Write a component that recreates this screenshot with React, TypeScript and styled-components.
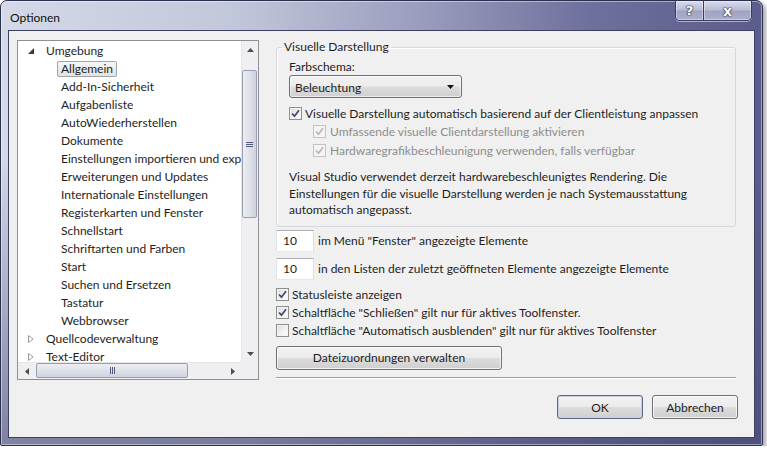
import React from "react";
import styled, { createGlobalStyle } from "styled-components";

const FONT = `Lato, "Liberation Sans", sans-serif`;

const GlobalStyle = createGlobalStyle`
  body {
    margin: 0;
    background: #ffffff;
    font-family: ${FONT};
    font-size: 12px;
    color: #1e1e1e;
  }
`;

export default function App() {
  return (
    <>
      <GlobalStyle />
      <Window>
        <TitleBar>
          <Title>Optionen</Title>
          <CaptionButtons>
            <CaptionButton $wide={false}>?</CaptionButton>
            <CaptionButton $wide={true}>x</CaptionButton>
          </CaptionButtons>
        </TitleBar>
        <Client>
          <Main>
            <TreePanel />
            <RightPanel />
          </Main>
          <Footer>
            <PushButton $default>OK</PushButton>
            <PushButton>Abbrechen</PushButton>
          </Footer>
        </Client>
      </Window>
    </>
  );
}

const treeChildren = [
  "Allgemein",
  "Add-In-Sicherheit",
  "Aufgabenliste",
  "AutoWiederherstellen",
  "Dokumente",
  "Einstellungen importieren und exportieren",
  "Erweiterungen und Updates",
  "Internationale Einstellungen",
  "Registerkarten und Fenster",
  "Schnellstart",
  "Schriftarten und Farben",
  "Start",
  "Suchen und Ersetzen",
  "Tastatur",
  "Webbrowser",
];

function TreePanel() {
  return (
    <Tree>
      <TreeContent>
        <TreeRow $level={0}>
          <Expander>
            <svg width="6" height="6" viewBox="0 0 6 6">
              <path d="M6 0 L6 6 L0 6 Z" fill="#3b3b3b" />
            </svg>
          </Expander>
          <TreeLabel>Umgebung</TreeLabel>
        </TreeRow>
        {treeChildren.map((t, i) => (
          <TreeRow key={t} $level={1}>
            <TreeLabel $selected={i === 0}>{t}</TreeLabel>
          </TreeRow>
        ))}
        {["Quellcodeverwaltung", "Text-Editor"].map((t) => (
          <TreeRow key={t} $level={0}>
            <Expander>
              <svg width="6" height="8" viewBox="0 0 6 8">
                <path d="M0.5 0.5 L5 4 L0.5 7.5 Z" fill="none" stroke="#9a9a9a" />
              </svg>
            </Expander>
            <TreeLabel>{t}</TreeLabel>
          </TreeRow>
        ))}
      </TreeContent>
      <VScroll>
        <ScrollArrow>
          <svg width="7" height="4" viewBox="0 0 7 4">
            <path d="M0 4 L3.5 0 L7 4 Z" fill="#4d4d4d" />
          </svg>
        </ScrollArrow>
        <VTrack>
          <VThumb>
            <svg width="7" height="7" viewBox="0 0 7 7">
              <path d="M0 1.5 H7 M0 3.5 H7 M0 5.5 H7" stroke="#55597a" strokeWidth="1" />
            </svg>
          </VThumb>
        </VTrack>
        <ScrollArrow>
          <svg width="7" height="4" viewBox="0 0 7 4">
            <path d="M0 0 L3.5 4 L7 0 Z" fill="#4d4d4d" />
          </svg>
        </ScrollArrow>
      </VScroll>
      <HScroll>
        <ScrollArrow>
          <svg width="4" height="7" viewBox="0 0 4 7">
            <path d="M4 0 L0 3.5 L4 7 Z" fill="#4d4d4d" />
          </svg>
        </ScrollArrow>
        <HTrack>
          <HThumb>
            <svg width="7" height="7" viewBox="0 0 7 7">
              <path d="M1.5 0 V7 M3.5 0 V7 M5.5 0 V7" stroke="#55597a" strokeWidth="1" />
            </svg>
          </HThumb>
        </HTrack>
        <ScrollArrow>
          <svg width="4" height="7" viewBox="0 0 4 7">
            <path d="M0 0 L4 3.5 L0 7 Z" fill="#4d4d4d" />
          </svg>
        </ScrollArrow>
      </HScroll>
      <ScrollCorner />
    </Tree>
  );
}

function CheckBox({ checked, disabled }: { checked: boolean; disabled?: boolean }) {
  return (
    <CheckBoxBox $disabled={disabled}>
      {checked && (
        <svg width="11" height="11" viewBox="0 0 11 11">
          <path
            d="M2 5.5 L4.5 8.2 L9 2.3"
            fill="none"
            stroke={disabled ? "#b9b9b9" : "#3f4a6e"}
            strokeWidth="1.8"
          />
        </svg>
      )}
    </CheckBoxBox>
  );
}

function RightPanel() {
  return (
    <Right>
      <GroupBox>
        <Legend>Visuelle Darstellung</Legend>
        <FieldLabel>Farbschema:</FieldLabel>
        <ComboBox>
          <span>Beleuchtung</span>
          <svg width="7" height="4" viewBox="0 0 7 4">
            <path d="M0 0 L7 0 L3.5 4 Z" fill="#111" />
          </svg>
        </ComboBox>
        <CheckRow $indent={0} $first>
          <CheckBox checked />
          <span>Visuelle Darstellung automatisch basierend auf der Clientleistung anpassen</span>
        </CheckRow>
        <CheckRow $indent={24} $disabled>
          <CheckBox checked disabled />
          <span>Umfassende visuelle Clientdarstellung aktivieren</span>
        </CheckRow>
        <CheckRow $indent={24} $disabled>
          <CheckBox checked disabled />
          <span>Hardwaregrafikbeschleunigung verwenden, falls verfügbar</span>
        </CheckRow>
        <Note>
          Visual Studio verwendet derzeit hardwarebeschleunigtes Rendering. Die
          Einstellungen für die visuelle Darstellung werden je nach Systemausstattung
          automatisch angepasst.
        </Note>
      </GroupBox>
      <NumberRow $first>
        <NumberBox>10</NumberBox>
        <span>im Menü "Fenster" angezeigte Elemente</span>
      </NumberRow>
      <NumberRow>
        <NumberBox>10</NumberBox>
        <span>in den Listen der zuletzt geöffneten Elemente angezeigte Elemente</span>
      </NumberRow>
      <CheckList>
        <CheckRow $indent={0}>
          <CheckBox checked />
          <span>Statusleiste anzeigen</span>
        </CheckRow>
        <CheckRow $indent={0}>
          <CheckBox checked />
          <span>Schaltfläche "Schließen" gilt nur für aktives Toolfenster.</span>
        </CheckRow>
        <CheckRow $indent={0}>
          <CheckBox checked={false} />
          <span>Schaltfläche "Automatisch ausblenden" gilt nur für aktives Toolfenster</span>
        </CheckRow>
      </CheckList>
      <WideButton>Dateizuordnungen verwalten</WideButton>
      <Separator />
    </Right>
  );
}

const Window = styled.div`
  width: 763px;
  height: 446px;
  box-sizing: border-box;
  display: flex;
  flex-direction: column;
  padding: 0 7px 7px 7px;
  border: 1px solid #2c2f4d;
  border-radius: 7px 7px 2px 2px;
  background:
    linear-gradient(to bottom, rgba(70, 72, 115, 0) 0%, rgba(70, 72, 115, 0) 35%, rgba(70, 72, 115, 0.6) 100%),
    linear-gradient(to right, #d3d9e6 0%, #c2c8db 30%, #9a9dbd 55%, #6d6f9c 78%, #5a5c8b 100%);
  box-shadow: 3px 3px 5px rgba(0, 0, 0, 0.35), inset 0 0 0 1px rgba(255, 255, 255, 0.45);
`;

const TitleBar = styled.div`
  height: 29px;
  display: flex;
  align-items: flex-start;
  margin: 0 -7px 0 -7px;
`;

const Title = styled.div`
  padding: 9px 0 0 9px;
  font-size: 12px;
  line-height: 15px;
  color: #111;
`;

const CaptionButtons = styled.div`
  margin-left: auto;
  margin-right: 10px;
  display: flex;
  border: 1px solid #3a3d5e;
  border-top: none;
  border-radius: 0 0 5px 5px;
  overflow: hidden;
  box-shadow: 0 1px 0 rgba(255, 255, 255, 0.5);
`;

const CaptionButton = styled.div<{ $wide: boolean }>`
  width: ${(p) => (p.$wide ? 47 : 27)}px;
  height: 19px;
  display: flex;
  align-items: center;
  justify-content: center;
  font-family: "DejaVu Sans", sans-serif;
  font-weight: bold;
  font-size: ${(p) => (p.$wide ? 14 : 13)}px;
  color: #ffffff;
  text-shadow: 0 0 1px #2a2c48, 0 0 1px #2a2c48, 0 0 2px #2a2c48;
  background: linear-gradient(to bottom, #d9dceb 0%, #b8bcd3 48%, #9ea3c0 52%, #aab0cd 100%);
  border-left: ${(p) => (p.$wide ? "1px solid #3a3d5e" : "none")};
  box-shadow: inset 0 0 0 1px rgba(255, 255, 255, 0.4);
`;

const Client = styled.div`
  flex: 1;
  display: flex;
  flex-direction: column;
  background: #f0f0f0;
  border: 1px solid #3d4062;
  padding: 9px 16px 0 8px;
`;

const Main = styled.div`
  display: flex;
  gap: 17px;
`;

const Tree = styled.div`
  width: 242px;
  height: 340px;
  box-sizing: border-box;
  border: 1px solid #8d9095;
  background: #ffffff;
  display: grid;
  grid-template-columns: 1fr 17px;
  grid-template-rows: 1fr 17px;
`;

const TreeContent = styled.div`
  overflow: hidden;
  white-space: nowrap;
  padding-top: 1px;
`;

const TreeRow = styled.div<{ $level: number }>`
  height: 18px;
  display: flex;
  align-items: center;
  padding-left: ${(p) => (p.$level === 0 ? 10 : 39)}px;
`;

const Expander = styled.span`
  width: 14px;
  display: flex;
  align-items: center;
`;

const TreeLabel = styled.span<{ $selected?: boolean }>`
  padding: 0 3px;
  line-height: 14px;
  border: 1px solid ${(p) => (p.$selected ? "#a4a4a4" : "transparent")};
  border-radius: 2px;
  background: ${(p) => (p.$selected ? "linear-gradient(#f6f6f6, #e2e2e2)" : "transparent")};
`;

const VScroll = styled.div`
  display: flex;
  flex-direction: column;
  background: #efeff2;
  border-left: 1px solid #e6e6ea;
`;

const ScrollArrow = styled.div`
  flex: 0 0 17px;
  display: flex;
  align-items: center;
  justify-content: center;
`;

const VTrack = styled.div`
  flex: 1;
  padding: 12px 0 0 0;
`;

const VThumb = styled.div`
  width: 15px;
  height: 148px;
  box-sizing: border-box;
  border: 1px solid #9a9db0;
  border-radius: 2px;
  background: linear-gradient(to right, #eceef3 0%, #dfe1ea 50%, #cfd2de 100%);
  display: flex;
  align-items: center;
  justify-content: center;
`;

const HScroll = styled.div`
  display: flex;
  background: #efeff2;
  border-top: 1px solid #e6e6ea;
`;

const HTrack = styled.div`
  flex: 1;
  padding-left: 1px;
`;

const HThumb = styled.div`
  width: 152px;
  height: 15px;
  box-sizing: border-box;
  border: 1px solid #9a9db0;
  border-radius: 2px;
  background: linear-gradient(to bottom, #eceef3 0%, #dfe1ea 50%, #cfd2de 100%);
  display: flex;
  align-items: center;
  justify-content: center;
`;

const ScrollCorner = styled.div`
  background: #efeff2;
`;

const Right = styled.div`
  width: 460px;
  display: flex;
  flex-direction: column;
`;

const GroupBox = styled.fieldset`
  margin: 0;
  padding: 5px 12px 7px 12px;
  border: 1px solid #d8d8dc;
  border-radius: 3px;
  box-shadow: inset 1px 1px 0 #ffffff;
  display: flex;
  flex-direction: column;
`;

const Legend = styled.legend`
  margin-left: -7px;
  padding: 0 2px;
  line-height: 14px;
`;

const FieldLabel = styled.div`
  line-height: 16px;
`;

const ComboBox = styled.div`
  width: 173px;
  height: 23px;
  box-sizing: border-box;
  border: 1px solid #707070;
  border-radius: 3px;
  background: linear-gradient(to bottom, #f2f2f2 0%, #ebebeb 49%, #dddddd 51%, #cfcfcf 100%);
  box-shadow: inset 0 0 0 1px rgba(255, 255, 255, 0.6);
  display: flex;
  align-items: center;
  justify-content: space-between;
  padding: 1px 7px 0 5px;
`;

const CheckRow = styled.div<{ $indent: number; $first?: boolean; $disabled?: boolean }>`
  height: ${(p) => (p.$indent ? 19 : 18)}px;
  display: flex;
  align-items: center;
  gap: ${(p) => (p.$indent ? 4 : 3)}px;
  padding-left: ${(p) => p.$indent}px;
  margin-top: ${(p) => (p.$first ? 6 : 0)}px;
  color: ${(p) => (p.$disabled ? "#8d8d8d" : "#1e1e1e")};
  white-space: nowrap;
`;

const CheckBoxBox = styled.span<{ $disabled?: boolean }>`
  width: 13px;
  height: 13px;
  box-sizing: border-box;
  border: 1px solid ${(p) => (p.$disabled ? "#c4c4c4" : "#8e8f8f")};
  background: ${(p) =>
    p.$disabled ? "#f4f4f4" : "linear-gradient(135deg, #dcdcdc 0%, #f6f6f6 70%, #ffffff 100%)"};
  box-shadow: inset 0 0 0 1px #f4f4f4;
  display: flex;
  align-items: center;
  justify-content: center;
  flex-shrink: 0;
`;

const Note = styled.p`
  margin: 9px 0 0 0;
  line-height: 16.5px;
`;

const NumberRow = styled.div<{ $first?: boolean }>`
  display: flex;
  align-items: center;
  gap: 4px;
  margin-top: ${(p) => (p.$first ? 3 : 6)}px;
  white-space: nowrap;
`;

const NumberBox = styled.div`
  width: 38px;
  height: 22px;
  box-sizing: border-box;
  background: #ffffff;
  border: 1px solid;
  border-color: #abadb3 #dbdfe6 #e3e9ef #e2e3ea;
  padding-left: 6px;
  line-height: 20px;
`;

const CheckList = styled.div`
  margin-top: 6px;
  display: flex;
  flex-direction: column;
`;

const PushButton = styled.div<{ $default?: boolean }>`
  width: 86px;
  height: 24px;
  box-sizing: border-box;
  border: 1px solid ${(p) => (p.$default ? "#5d6786" : "#707070")};
  border-radius: 3px;
  background: linear-gradient(to bottom, #f2f2f2 0%, #ebebeb 49%, #dddddd 51%, #cfcfcf 100%);
  box-shadow: inset 0 0 0 1px ${(p) => (p.$default ? "#c8cde0" : "rgba(255, 255, 255, 0.7)")};
  display: flex;
  align-items: center;
  justify-content: center;
`;

const WideButton = styled(PushButton)`
  width: 226px;
  margin-top: 6px;
`;

const Separator = styled.div`
  margin-top: 7px;
  height: 1px;
  background: #a0a0a0;
  border-bottom: 1px solid #ffffff;
`;

const Footer = styled.div`
  display: flex;
  justify-content: flex-end;
  gap: 9px;
  padding-top: 15px;
`;
